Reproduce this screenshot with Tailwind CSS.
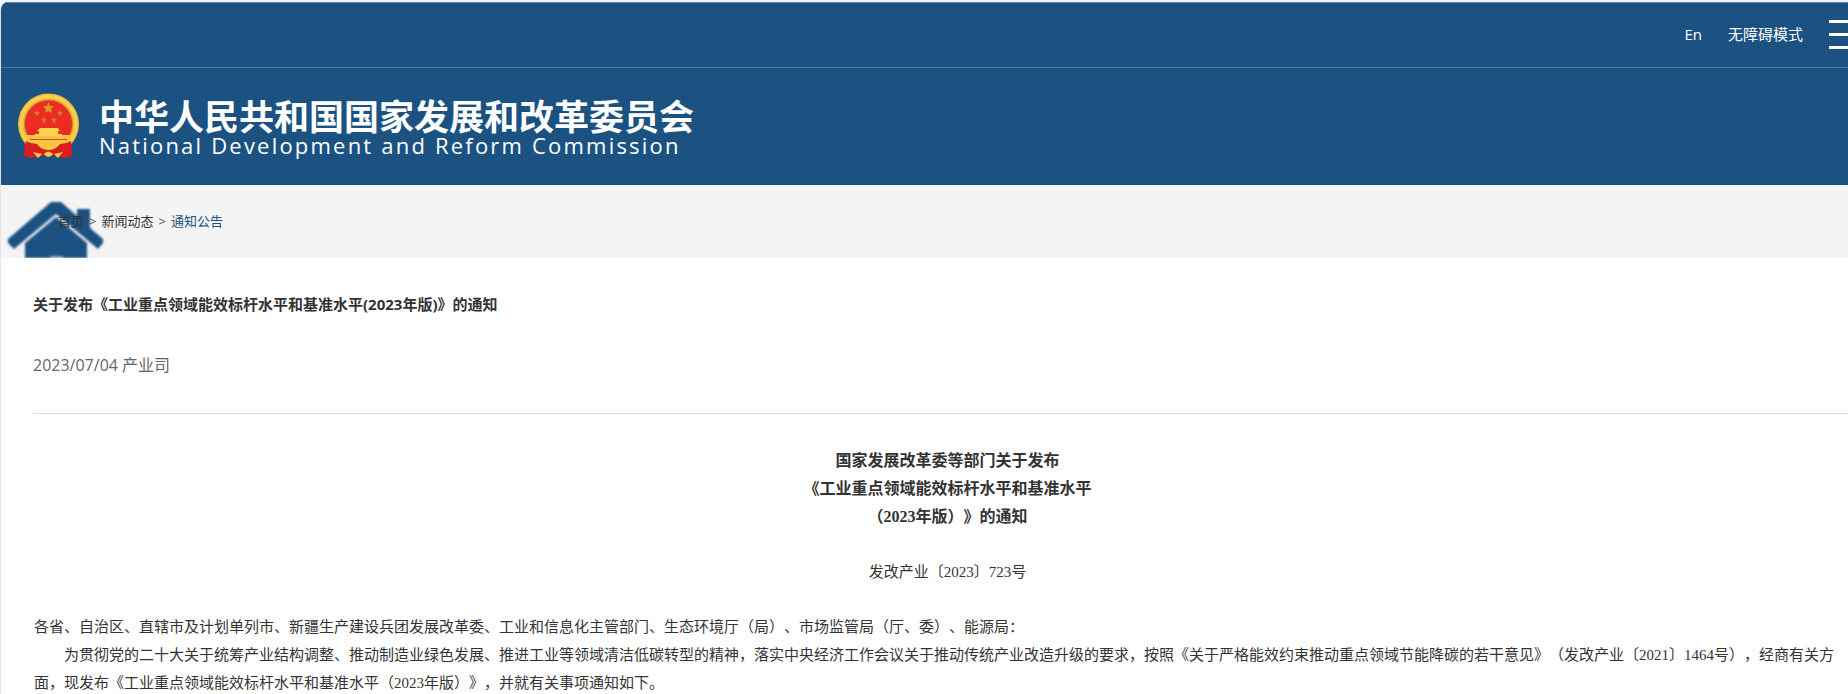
<!DOCTYPE html>
<html lang="zh-CN">
<head>
<meta charset="utf-8">
<meta name="viewport" content="width=device-width, initial-scale=1">
<title>关于发布《工业重点领域能效标杆水平和基准水平(2023年版)》的通知</title>
<script src="https://cdn.jsdelivr.net/npm/@tailwindcss/browser@4"></script>
</head>
<body class="overflow-hidden bg-[#f4f4f4] font-['Open_Sans','Noto_Sans_CJK_SC',sans-serif] text-[#333] [text-spacing-trim:space-all]">
<div class="mt-0.5 min-h-screen overflow-hidden rounded-tl-lg border-l border-[#e4e4e4] bg-white">
  <header class="border-t border-[#5f86a9] bg-[#1c5282] text-white">
    <nav class="flex h-[65px] items-center justify-end border-b border-[#4975a0] pb-0.5 text-[15px]">
      <a href="#" class="mr-[26px]">En</a>
      <a href="#" class="mr-[26px]">无障碍模式</a>
      <button type="button" aria-label="菜单" class="flex w-[19px] flex-col gap-[10px]">
        <span class="h-[3px] bg-white"></span>
        <span class="h-[3px] bg-white"></span>
        <span class="h-[3px] bg-white"></span>
      </button>
    </nav>
    <a href="#" class="flex h-[117px] items-center gap-[19px] pb-0.5 pl-4">
      <svg class="h-[66px] w-[63px] shrink-0" viewBox="0 0 63 66" aria-hidden="true">
        <path d="M8 47 L7 63 L15 65 L31 62 L47 65 L55 63 L54 47Z" fill="#cf1a1c"/>
        <circle cx="31.500" cy="31" r="30.500" fill="#f0b93a"/>
        <circle cx="31.500" cy="31" r="27.500" fill="none" stroke="#fbd04f" stroke-width="3"/>
        <circle cx="31.500" cy="31" r="24" fill="#ee2a24" stroke="#c98a22"/>
        <path d="M8 42H55Q52 49 46 53H17Q11 49 8 42Z" fill="#f7c544"/>
        <path d="M22 38V41H18V43H45V41H41V38H43L41 35H23L20 38Z" fill="#ffd34f"/>
        <path d="M13 46.500H50" stroke="#de4424" stroke-width="1"/>
        <path d="M31.500 9l1.500 4h4l-3 3 1 4-3.500-2-3.500 2 1-4-3-3h4z" fill="#d99a2a"/>
        <path d="M20 17l1 2h2l-2 2 1 2-2-1-2 1 1-2-2-2h2zM43 17l1 2h2l-2 2 1 2-2-1-2 1 1-2-2-2h2zM27 24l1 2h2l-2 2 1 2-2-1-2 1 1-2-2-2h2zM37 24l1 2h2l-2 2 1 2-2-1-2 1 1-2-2-2h2z" fill="#c9852a"/>
        <path d="M9 48Q14 51 20 51Q25 57 31.500 57Q38 57 43 51Q49 51 54 48L55 63L47 65L40 60L31 64L23 60L15 65L7 63Z" fill="#dc1d1e"/>
        <path d="M20 50Q27 54 31 50Q36 54 43 50Q40 57 31 56Q23 57 20 50Z" fill="#f8c740"/>
        <path d="M16 59L25 61L21 65ZM46 59L37 61L41 65ZM27 61Q31 56 36 61Q31 67 27 61Z" fill="#f9cc49"/>
      </svg>
      <span class="flex flex-col pt-2.5">
        <span class="text-[35px] leading-7 font-bold">中华人民共和国国家发展和改革委员会</span>
        <span class="text-[22px] leading-7 tracking-widest">National Development and Reform Commission</span>
      </span>
    </a>
  </header>
  <nav aria-label="面包屑" class="relative flex h-[73px] items-center gap-[5px] overflow-hidden bg-[#f4f4f4] pl-[57px] text-[13px]">
    <svg class="absolute top-[17px] left-[7px] h-14 w-24 blur-[1px]" viewBox="0 0 96 56" aria-hidden="true">
      <path d="M43 0H53L69 14V7H82V26L95 37V41L90 47L48 12L6 47L0 41V37Z" fill="#1c5282"/>
      <path d="M17 41L48 15L79 41V60H17Z" fill="#1c5282"/>
      <path d="M42 55H55" stroke="#8aa7c1" stroke-width="2"/>
    </svg>
    <a href="#" class="relative">首页</a>
    <span class="relative text-[#555]">&gt;</span>
    <a href="#">新闻动态</a>
    <span class="text-[#555]">&gt;</span>
    <a href="#" class="text-[#1c5282]">通知公告</a>
  </nav>
  <main class="-mr-[13px] ml-8">
    <h1 class="pt-[35px] text-[15px] leading-[22px] font-bold">关于发布《工业重点领域能效标杆水平和基准水平(2023年版)》的通知</h1>
    <p class="border-b border-[#ddd] pt-[39px] pb-[37px] text-base leading-[22px] text-[#666]">2023/07/04 产业司</p>
    <article class="pt-[33px] pl-px font-['Liberation_Serif','Noto_Sans_CJK_SC',serif] text-[15px] leading-7">
      <h2 class="text-center text-base leading-7 font-bold">国家发展改革委等部门关于发布<br>《工业重点领域能效标杆水平和基准水平<br>（2023年版）》的通知</h2>
      <p class="py-[27px] text-center">发改产业〔2023〕723号</p>
      <p>各省、自治区、直辖市及计划单列市、新疆生产建设兵团发展改革委、工业和信息化主管部门、生态环境厅（局）、市场监管局（厅、委）、能源局：</p>
      <p class="indent-[30px]">为贯彻党的二十大关于统筹产业结构调整、推动制造业绿色发展、推进工业等领域清洁低碳转型的精神，落实中央经济工作会议关于推动传统产业改造升级的要求，按照《关于严格能效约束推动重点领域节能降碳的若干意见》（发改产业〔2021〕1464号），经商有关方面，现发布《工业重点领域能效标杆水平和基准水平（2023年版）》，并就有关事项通知如下。</p>
    </article>
  </main>
</div>
</body>
</html>
